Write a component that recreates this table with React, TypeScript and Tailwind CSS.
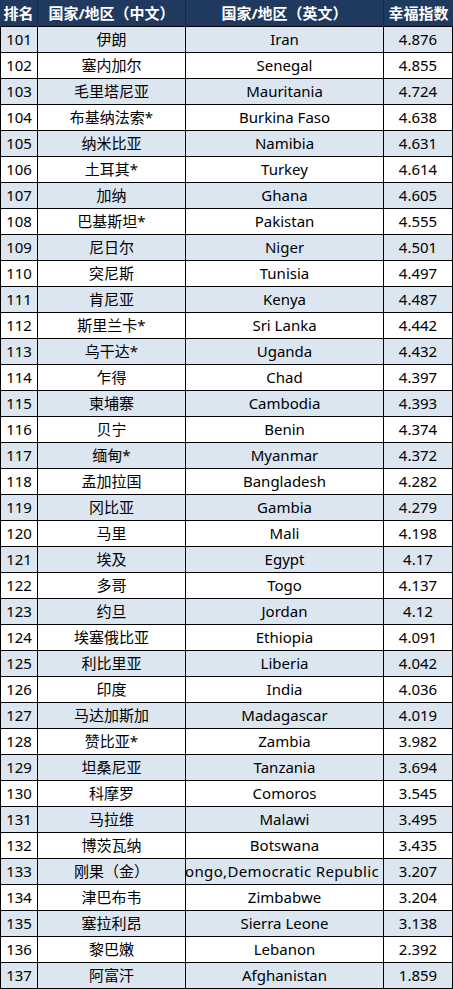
const rows: [number, string, string, string][] = [
  [101, "伊朗", "Iran", "4.876"],
  [102, "塞内加尔", "Senegal", "4.855"],
  [103, "毛里塔尼亚", "Mauritania", "4.724"],
  [104, "布基纳法索*", "Burkina Faso", "4.638"],
  [105, "纳米比亚", "Namibia", "4.631"],
  [106, "土耳其*", "Turkey", "4.614"],
  [107, "加纳", "Ghana", "4.605"],
  [108, "巴基斯坦*", "Pakistan", "4.555"],
  [109, "尼日尔", "Niger", "4.501"],
  [110, "突尼斯", "Tunisia", "4.497"],
  [111, "肯尼亚", "Kenya", "4.487"],
  [112, "斯里兰卡*", "Sri Lanka", "4.442"],
  [113, "乌干达*", "Uganda", "4.432"],
  [114, "乍得", "Chad", "4.397"],
  [115, "柬埔寨", "Cambodia", "4.393"],
  [116, "贝宁", "Benin", "4.374"],
  [117, "缅甸*", "Myanmar", "4.372"],
  [118, "孟加拉国", "Bangladesh", "4.282"],
  [119, "冈比亚", "Gambia", "4.279"],
  [120, "马里", "Mali", "4.198"],
  [121, "埃及", "Egypt", "4.17"],
  [122, "多哥", "Togo", "4.137"],
  [123, "约旦", "Jordan", "4.12"],
  [124, "埃塞俄比亚", "Ethiopia", "4.091"],
  [125, "利比里亚", "Liberia", "4.042"],
  [126, "印度", "India", "4.036"],
  [127, "马达加斯加", "Madagascar", "4.019"],
  [128, "赞比亚*", "Zambia", "3.982"],
  [129, "坦桑尼亚", "Tanzania", "3.694"],
  [130, "科摩罗", "Comoros", "3.545"],
  [131, "马拉维", "Malawi", "3.495"],
  [132, "博茨瓦纳", "Botswana", "3.435"],
  [133, "刚果（金）", "Congo,Democratic Republic", "3.207"],
  [134, "津巴布韦", "Zimbabwe", "3.204"],
  [135, "塞拉利昂", "Sierra Leone", "3.138"],
  [136, "黎巴嫩", "Lebanon", "2.392"],
  [137, "阿富汗", "Afghanistan", "1.859"],
];

const font = { fontFamily: '"Noto Sans", "Noto Sans CJK SC", sans-serif' };

export default function App() {
  return (
    <div className="w-[453px] bg-white text-[15px] leading-none text-black" style={font}>
      <div className="flex h-[26px] bg-[#203a5f] font-bold text-white">
        <div className="flex w-[38px] items-center justify-center border-r border-[#17294a]">排名</div>
        <div className="flex w-[148px] items-center justify-center border-r border-[#17294a]">国家/地区（中文）</div>
        <div className="flex w-[198px] items-center justify-center border-r border-[#17294a]">国家/地区（英文）</div>
        <div className="flex w-[69px] items-center justify-center">幸福指数</div>
      </div>
      {rows.map(([rank, cn, en, score], i) => (
        <div
          key={rank}
          className={
            "flex h-[26px] border-t border-l border-black " +
            (i % 2 === 0 ? "bg-[#dce6f0] " : "bg-white ") +
            (i === rows.length - 1 ? "h-[27px] border-b" : "")
          }
        >
          <div className="flex w-[37px] items-center justify-center border-r border-black">{rank}</div>
          <div className="flex w-[148px] items-center justify-center border-r border-black">{cn}</div>
          <div
            className={
              "flex w-[198px] items-center overflow-hidden whitespace-nowrap border-r border-black " +
              (en.length > 22 ? "justify-end pr-[4px] tracking-[0.35px]" : "justify-center")
            }
          >
            <span className="shrink-0">{en}</span>
          </div>
          <div className="flex w-[69px] items-center justify-center border-r border-black">{score}</div>
        </div>
      ))}
    </div>
  );
}
